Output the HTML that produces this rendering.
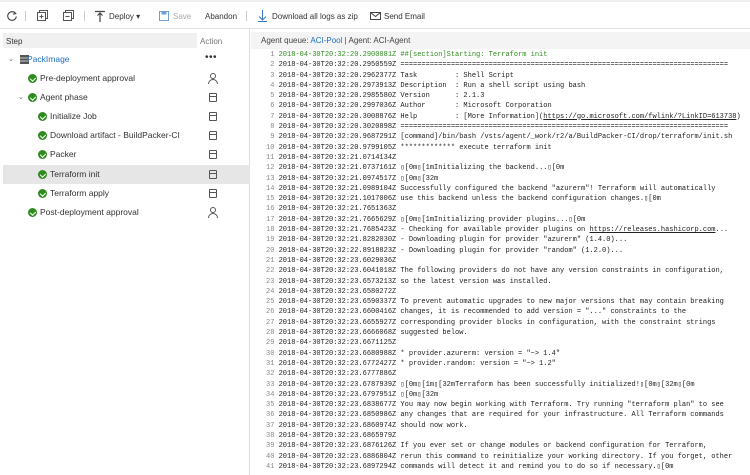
<!DOCTYPE html>
<html><head><meta charset="utf-8"><style>
*{margin:0;padding:0;box-sizing:border-box}
body{width:750px;height:475px;overflow:hidden;background:#fff;font-family:"Liberation Sans",sans-serif;font-size:8.5px;color:#333;position:relative}
.tb{position:absolute;top:0;left:0;width:750px;height:29px;border-bottom:1px solid #e0e0e0;border-top:2px solid #eee}
.tb span{position:absolute;top:10px;font-size:8px;color:#333}
.left{position:absolute;left:0;top:29px;width:250px;height:446px;border-right:1px solid #ddd}
.hdr{position:absolute;left:3px;top:33px;width:194px;height:15px;background:#f0f0f0;font-size:8px;padding:4px 3px}
.act{position:absolute;left:200px;top:37px;font-size:8px;color:#777}
.row{position:absolute;left:3px;width:247px;height:19px;font-size:8.5px;line-height:19px}
.ck{position:absolute;top:5px;width:9px;height:9px;border-radius:50%;background:#2e8b1e}
.ck:after{content:"";position:absolute;left:2.5px;top:1.5px;width:2.5px;height:4px;border:solid #fff;border-width:0 1.3px 1.3px 0;transform:rotate(45deg)}
.ai{position:absolute;left:206px;top:5px;width:8px;height:9px;border:1px solid #555;border-radius:1px}
.ai:after{content:"";position:absolute;left:0;right:0;top:2px;border-top:1px solid #555}
.pi{position:absolute;left:205px;top:4px;width:10px;height:11px}
.aq{position:absolute;left:251px;top:32px;width:499px;height:17px;background:#f4f4f4;font-size:8px;padding:4px 10px;color:#444}
pre{position:absolute;left:266px;top:50px;font-family:"Liberation Mono",monospace;font-size:7px;line-height:10.3px;color:#222;white-space:pre}
.n{color:#888}
.g{color:#2e8b1e}
u{text-decoration:underline}
</style></head><body>
<div class="tb">
<svg style="position:absolute;left:6px;top:8px" width="12" height="12" viewBox="0 0 12 12"><path d="M9.5 3.5A4.3 4.3 0 1 0 10.3 6.5" fill="none" stroke="#444" stroke-width="1.1"/><path d="M7.5 1.5l2.2 2.1-2.6 0.6" fill="none" stroke="#444" stroke-width="1.1"/></svg>
<div style="position:absolute;left:25px;top:9px;width:1px;height:10px;background:#ccc"></div>
<svg style="position:absolute;left:37px;top:8px" width="11" height="11"><rect x="2.5" y="0.5" width="8" height="8" fill="none" stroke="#555"/><rect x="0.5" y="2.5" width="8" height="8" fill="#fff" stroke="#555"/><path d="M2.5 6.5h4M4.5 4.5v4" stroke="#555"/></svg>
<svg style="position:absolute;left:63px;top:8px" width="11" height="11"><rect x="2.5" y="0.5" width="8" height="8" fill="none" stroke="#555"/><rect x="0.5" y="2.5" width="8" height="8" fill="#fff" stroke="#555"/><path d="M2.5 6.5h4" stroke="#555"/></svg>
<div style="position:absolute;left:84px;top:9px;width:1px;height:10px;background:#ccc"></div>
<svg style="position:absolute;left:95px;top:8px" width="10" height="12"><path d="M0 1.5h10M5 3v9M2.5 5.5L5 3l2.5 2.5" fill="none" stroke="#444" stroke-width="1.2"/></svg>
<span style="left:109px">Deploy ▾</span>
<svg style="position:absolute;left:159px;top:9px" width="10" height="10"><rect x="0.5" y="0.5" width="9" height="9" fill="none" stroke="#6a9fd8"/><rect x="2.5" y="0.5" width="5" height="3" fill="#6a9fd8"/></svg>
<span style="left:173px;color:#aaa">Save</span>
<span style="left:205px">Abandon</span>
<div style="position:absolute;left:246px;top:9px;width:1px;height:10px;background:#ccc"></div>
<svg style="position:absolute;left:258px;top:8px" width="9" height="12"><path d="M4.5 0v10M1 6.5l3.5 3.5 3.5-3.5M0 11.5h9" fill="none" stroke="#3a7bc8" stroke-width="1"/></svg>
<span style="left:272px">Download all logs as zip</span>
<svg style="position:absolute;left:370px;top:10px" width="11" height="8"><rect x="0.5" y="0.5" width="10" height="7" fill="none" stroke="#444"/><path d="M0.5 0.5l5 4 5-4" fill="none" stroke="#444"/></svg>
<span style="left:384px">Send Email</span>
</div>
<div class="left"></div>
<div class="hdr">Step</div>
<div class="act">Action</div>
<div class="row" style="top:50px"><span style="position:absolute;left:5px;color:#666;font-size:7px">⌄</span><svg style="position:absolute;left:17px;top:5px" width="9" height="9"><rect width="9" height="9" fill="#555"/><path d="M0 3h9M0 6h9" stroke="#ccc"/></svg><span style="position:absolute;left:24px;color:#1e6fc5">PackImage</span><span style="position:absolute;left:202px;top:-2px;font-size:10px;letter-spacing:0.5px">•••</span></div>
<div class="row" style="top:69px"><i class="ck" style="left:25px"></i><span style="position:absolute;left:37px">Pre-deployment approval</span><svg class="pi" viewBox="0 0 10 11"><circle cx="5" cy="3" r="2.5" fill="none" stroke="#555"/><path d="M0.5 11a4.5 4.5 0 0 1 9 0" fill="none" stroke="#555"/></svg></div>
<div class="row" style="top:88px"><span style="position:absolute;left:15px;color:#666;font-size:7px">⌄</span><i class="ck" style="left:25px"></i><span style="position:absolute;left:37px">Agent phase</span><i class="ai"></i></div>
<div class="row" style="top:107px"><i class="ck" style="left:35px"></i><span style="position:absolute;left:47px">Initialize Job</span><i class="ai"></i></div>
<div class="row" style="top:126px"><i class="ck" style="left:35px"></i><span style="position:absolute;left:47px">Download artifact - BuildPacker-CI</span><i class="ai"></i></div>
<div class="row" style="top:145px"><i class="ck" style="left:35px"></i><span style="position:absolute;left:47px">Packer</span><i class="ai"></i></div>
<div class="row" style="top:165px;background:#e6e6e6"><i class="ck" style="left:35px"></i><span style="position:absolute;left:47px">Terraform init</span><i class="ai"></i></div>
<div class="row" style="top:184px"><i class="ck" style="left:35px"></i><span style="position:absolute;left:47px">Terraform apply</span><i class="ai"></i></div>
<div class="row" style="top:203px"><i class="ck" style="left:25px"></i><span style="position:absolute;left:37px">Post-deployment approval</span><svg class="pi" viewBox="0 0 10 11"><circle cx="5" cy="3" r="2.5" fill="none" stroke="#555"/><path d="M0.5 11a4.5 4.5 0 0 1 9 0" fill="none" stroke="#555"/></svg></div>
<div class="aq">Agent queue: <span style="color:#1e6fc5">ACI-Pool</span> | Agent: ACI-Agent</div>
<pre><span class="n"> 1</span> <span class="g">2018-04-30T20:32:20.2900081Z ##[section]Starting: Terraform init</span>
<span class="n"> 2</span> 2018-04-30T20:32:20.2950559Z ==============================================================================
<span class="n"> 3</span> 2018-04-30T20:32:20.2962377Z Task         : Shell Script
<span class="n"> 4</span> 2018-04-30T20:32:20.2973913Z Description  : Run a shell script using bash
<span class="n"> 5</span> 2018-04-30T20:32:20.2985580Z Version      : 2.1.3
<span class="n"> 6</span> 2018-04-30T20:32:20.2997036Z Author       : Microsoft Corporation
<span class="n"> 7</span> 2018-04-30T20:32:20.3008876Z Help         : [More Information](<u>https://go.microsoft.com/fwlink/?LinkID=613738</u>)
<span class="n"> 8</span> 2018-04-30T20:32:20.3020898Z ==============================================================================
<span class="n"> 9</span> 2018-04-30T20:32:20.9687291Z [command]/bin/bash /vsts/agent/_work/r2/a/BuildPacker-CI/drop/terraform/init.sh
<span class="n">10</span> 2018-04-30T20:32:20.9799105Z ************* execute terraform init
<span class="n">11</span> 2018-04-30T20:32:21.0714134Z
<span class="n">12</span> 2018-04-30T20:32:21.0737161Z ▯[0m▯[1mInitializing the backend...▯[0m
<span class="n">13</span> 2018-04-30T20:32:21.0974517Z ▯[0m▯[32m
<span class="n">14</span> 2018-04-30T20:32:21.0989104Z Successfully configured the backend "azurerm"! Terraform will automatically
<span class="n">15</span> 2018-04-30T20:32:21.1017006Z use this backend unless the backend configuration changes.▯[0m
<span class="n">16</span> 2018-04-30T20:32:21.7651363Z
<span class="n">17</span> 2018-04-30T20:32:21.7665629Z ▯[0m▯[1mInitializing provider plugins...▯[0m
<span class="n">18</span> 2018-04-30T20:32:21.7685423Z - Checking for available provider plugins on <u>https://releases.hashicorp.com</u>...
<span class="n">19</span> 2018-04-30T20:32:21.8282030Z - Downloading plugin for provider "azurerm" (1.4.0)...
<span class="n">20</span> 2018-04-30T20:32:22.8918823Z - Downloading plugin for provider "random" (1.2.0)...
<span class="n">21</span> 2018-04-30T20:32:23.6029036Z
<span class="n">22</span> 2018-04-30T20:32:23.6041018Z The following providers do not have any version constraints in configuration,
<span class="n">23</span> 2018-04-30T20:32:23.6573213Z so the latest version was installed.
<span class="n">24</span> 2018-04-30T20:32:23.6580272Z
<span class="n">25</span> 2018-04-30T20:32:23.6590337Z To prevent automatic upgrades to new major versions that may contain breaking
<span class="n">26</span> 2018-04-30T20:32:23.6600416Z changes, it is recommended to add version = "..." constraints to the
<span class="n">27</span> 2018-04-30T20:32:23.6655927Z corresponding provider blocks in configuration, with the constraint strings
<span class="n">28</span> 2018-04-30T20:32:23.6666068Z suggested below.
<span class="n">29</span> 2018-04-30T20:32:23.6671125Z
<span class="n">30</span> 2018-04-30T20:32:23.6680988Z * provider.azurerm: version = "~> 1.4"
<span class="n">31</span> 2018-04-30T20:32:23.6772427Z * provider.random: version = "~> 1.2"
<span class="n">32</span> 2018-04-30T20:32:23.6777886Z
<span class="n">33</span> 2018-04-30T20:32:23.6787939Z ▯[0m▯[1m▯[32mTerraform has been successfully initialized!▯[0m▯[32m▯[0m
<span class="n">34</span> 2018-04-30T20:32:23.6797951Z ▯[0m▯[32m
<span class="n">35</span> 2018-04-30T20:32:23.6838677Z You may now begin working with Terraform. Try running "terraform plan" to see
<span class="n">36</span> 2018-04-30T20:32:23.6850986Z any changes that are required for your infrastructure. All Terraform commands
<span class="n">37</span> 2018-04-30T20:32:23.6860974Z should now work.
<span class="n">38</span> 2018-04-30T20:32:23.6865979Z
<span class="n">39</span> 2018-04-30T20:32:23.6876126Z If you ever set or change modules or backend configuration for Terraform,
<span class="n">40</span> 2018-04-30T20:32:23.6886804Z rerun this command to reinitialize your working directory. If you forget, other
<span class="n">41</span> 2018-04-30T20:32:23.6897294Z commands will detect it and remind you to do so if necessary.▯[0m</pre>
</body></html>
